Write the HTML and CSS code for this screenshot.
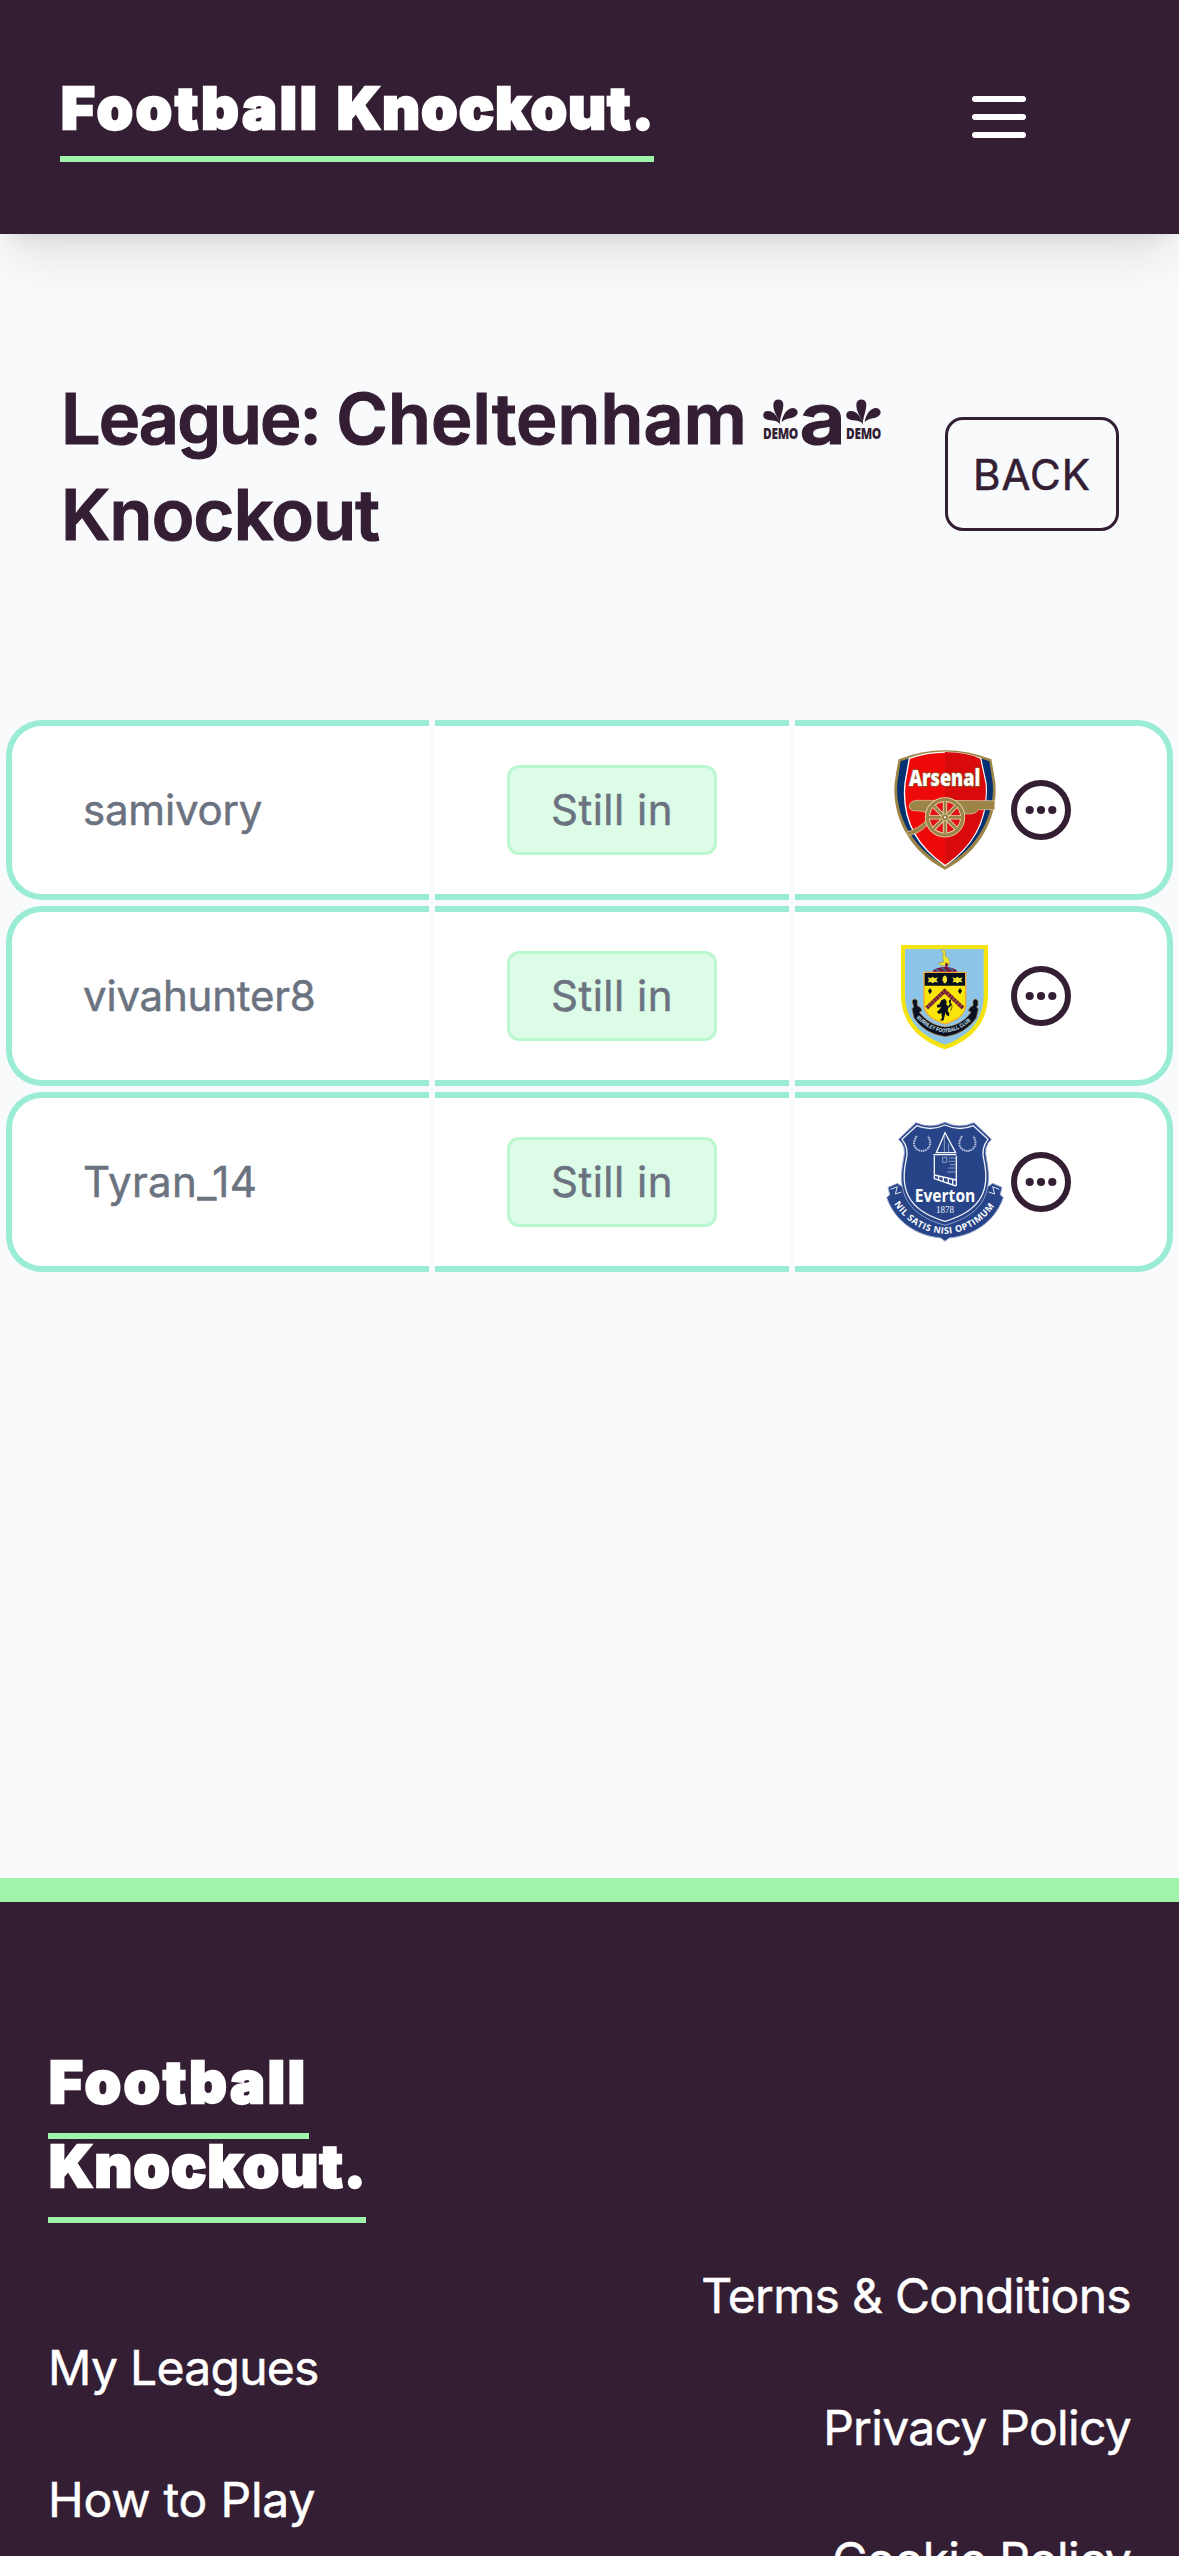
FILE: index.html
```html
<!DOCTYPE html>
<html lang="en">
<head>
<meta charset="utf-8">
<title>Football Knockout</title>
<link rel="stylesheet" href="styles.css">
</head>
<body>
<svg class="defs" aria-hidden="true">
  <defs>
    <symbol id="splash" viewBox="0 0 105 120">
      <path d="M50 77C50 60 31 42 31 18a15 15 0 0 1 30-3C61 37 51 52 50 77z"/>
      <path d="M52 79C44 60 26 68 9 61a13 13 0 0 1 6-25C34 36 47 57 52 79z"/>
      <path d="M56 69C60 45 73 28 90 27a13 13 0 0 1 10 22C91 61 71 55 56 69z"/>
      <text x="0" y="119" textLength="105" lengthAdjust="spacingAndGlyphs" font-family="Open Sans, sans-serif" font-weight="800" font-size="46">DEMO</text>
    </symbol>
    <symbol id="dots" viewBox="0 0 60 60">
      <circle cx="30" cy="30" r="27" fill="none" stroke="#341e34" stroke-width="6"/>
      <g fill="#341e34"><circle cx="18.7" cy="30" r="4.1"/><circle cx="30" cy="30" r="4.1"/><circle cx="41.3" cy="30" r="4.1"/></g>
    </symbol>
  </defs>
</svg>

<header class="topbar">
  <a class="logo"><span class="w1">Football</span> <span class="w2">Knockout.</span></a>
  <div class="burger"><i></i><i></i><i></i></div>
</header>

<main class="main">
  <div class="heading">
    <h1 class="title"><span class="first">League:</span> <span class="place">Cheltenham</span> <svg class="splash"><use href="#splash"/></svg><span class="mid">a</span><svg class="splash"><use href="#splash"/></svg> <span class="last">Knockout</span></h1>
    <button class="back">BACK</button>
  </div>

  <div class="table">
    <div class="row">
      <div class="cell name">samivory</div>
      <div class="cell status"><span class="badge">Still in</span></div>
      <div class="cell pick">
        <svg class="crest" viewBox="75 60 360 360">
          <path d="M116 88Q255 34 394 88Q400 120 406 160C414 250 370 360 255 419C140 360 96 250 104 160Q109 120 116 88z" fill="#9c8447"/>
          <path d="M122 94Q255 42 388 94Q393 125 398 160C405 246 362 350 255 408C148 350 105 246 112 160Q117 125 122 94z" fill="#023071"/>
          <path d="M148 85Q255 48 362 85L378 160C386 270 338 350 255 407C172 350 124 270 135 160z" fill="#ef0a0a" stroke="#fff" stroke-width="4"/>
          <path d="M255 66Q320 66 360 86L376 160C384 270 336 349 255 404z" fill="#d90a0c"/>
          <path d="M404 212v27h-48q-8 12-24 13H205q-12-10-45-10-14-3-12-15 2-13 20-16z" fill="#9c8447" stroke="#e8cfad" stroke-width="2"/>
          <path d="M215 262q-16 42-67 55l-12-9q42-13 67-41z" fill="#9c8447" stroke="#e8cfad" stroke-width="2"/>
          <circle cx="255" cy="262" r="53" fill="#e21114" stroke="#e8d9b5" stroke-width="15"/>
          <circle cx="255" cy="262" r="53" fill="none" stroke="#9c8447" stroke-width="10"/>
          <g stroke="#e8d9b5" stroke-width="13"><path d="M255 214v96M207 262h96M221 228l68 68M289 228l-68 68"/></g>
          <g stroke="#9c8447" stroke-width="8"><path d="M255 214v96M207 262h96M221 228l68 68M289 228l-68 68"/></g>
          <circle cx="255" cy="262" r="11" fill="#9c8447" stroke="#e8d9b5" stroke-width="2"/><circle cx="255" cy="262" r="3" fill="#fff"/>
          <text x="147" y="169" textLength="214" lengthAdjust="spacingAndGlyphs" font-family="Open Sans, sans-serif" font-weight="800" font-size="66" fill="#fff" stroke="#8f5a2c" stroke-width="5" paint-order="stroke">Arsenal</text>
        </svg>
        <svg class="more"><use href="#dots"/></svg>
      </div>
    </div>
    <div class="row">
      <div class="cell name">vivahunter8</div>
      <div class="cell status"><span class="badge">Still in</span></div>
      <div class="cell pick">
        <svg class="crest" viewBox="75 48 360 360">
          <path d="M123 75H384V226C384 310 330 364 255 388C180 364 123 310 123 226z" fill="#f3e310"/>
          <path d="M135 87H371V226C371 302 324 350 255 374C186 350 135 302 135 226z" fill="#8cc5e8"/>
          <path d="M244 94q8-9 13 1l-2 12q16 8 14 25l-8 5h-18l-7-9 14-1q2-9-2-14l2-14z" fill="#f0e52a" stroke="#8d8c40" stroke-width="1.5"/>
          <path d="M257 127l8 5-5 12h-5z" fill="#7a1940"/>
          <path d="M217 153q14-12 38-12t37 12l-6 4H222z" fill="#74183f"/>
          <path d="M226 147l12 8M246 143l12 10M268 143l12 10" stroke="#347bb4" stroke-width="4"/>
          <path d="M192 157H317V253C317 286 288 301 255 312C222 301 192 286 192 253z" fill="#f9e509" stroke="#f2a93b" stroke-width="4"/>
          <path d="M194 159H315V197H194z" fill="#060e20"/>
          <g fill="#eee32f"><path d="M203 172l9 3 6-5 6 5 10-3-5 8 5 7-10-1-6 4-6-4-9 1 4-7zM277 172l9 3 6-5 6 5 10-3-5 8 5 7-10-1-6 4-6-4-9 1 4-7z"/><path d="M249 170l7-4 5 7v9l-4 8h-5l-5-10z"/></g>
          <path d="M200 264L254 213L309 264" fill="none" stroke="#77203e" stroke-width="12" stroke-dasharray="9 1"/>
          <path d="M210 204l6 9-6 10-6-10zM300 204l6 9-6 10-6-10z" fill="#060e20"/>
          <path d="M244 241l10-5 6 8-1 10 7 5 3-8-3-9 8-5-2 9 1 11-8 7-2 9 5 7-1 9-8-4-2-9-4 16-3 10-10-1 6-7-2-15-8 3-5-7 7-6 6-8-11 2-3-7 8-3z" fill="#060e20"/>
          <path d="M272 272q8-12 1-23" fill="none" stroke="#060e20" stroke-width="2"/>
          <path d="M156 243q8-12 16-1v15q12 4 14 15l-8 5q30 39 78 44 50-5 77-44l-8-5q3-12 14-15v-15q8-10 15 1v12l-4 6 5 6-6 27q-34 48-93 56-61-8-94-56l-6-27 5-7z" fill="#081022" stroke="#b98640" stroke-width="2"/>
          <path id="ban" d="M169 294Q209 334 255 338Q303 334 341 294" fill="none"/>
          <text font-family="Liberation Sans, sans-serif" font-weight="700" font-size="17" fill="#cfe3ee"><textPath href="#ban" textLength="186" lengthAdjust="spacingAndGlyphs">BURNLEY FOOTBALL CLUB</textPath></text>
        </svg>
        <svg class="more"><use href="#dots"/></svg>
      </div>
    </div>
    <div class="row">
      <div class="cell name tyran">Tyran_14</div>
      <div class="cell status"><span class="badge">Still in</span></div>
      <div class="cell pick">
        <svg class="crest" viewBox="75 66 360 360">
          <path d="M84 262L112 250 130 262 255 372 380 262 398 250 426 262 421 284 430 293C404 368 336 408 268 414L255 424 242 414C174 408 106 368 80 293L89 284z" fill="#274488" stroke="#aab7d6" stroke-width="3"/>
          <path d="M92 268l20-8-6 22 18-6M418 268l-20-8 6 22-18-6" fill="none" stroke="#dfe5f1" stroke-width="3"/>
          <path d="M168 68Q212 88 255 67Q298 88 342 68L394 118Q370 139 379 176C396 260 386 340 255 376C124 340 114 260 131 176Q140 139 116 118z" fill="#274488" stroke="#8c9cc6" stroke-width="3"/>
          <path d="M170 77Q212 95 255 75Q298 95 340 77L384 118Q362 144 372 182C389 262 372 330 255 364C138 330 121 262 138 182Q148 144 126 118z" fill="#274488" stroke="#eef1f8" stroke-width="4"/>
          <g fill="none" stroke="#b6c2df" stroke-width="6" stroke-dasharray="5 2"><path d="M170 108q-16 26 0 39 16 12 32 0 16-15 2-39M306 108q-16 26 0 39 16 12 32 0 16-15 2-39"/></g>
          <g fill="none" stroke="#f4f6fb" stroke-width="4"><path d="M255 98L229 158H287zM220 164H289M223 167V225M289 167V258M223 225L289 240M221 235L288 258M223 225v10M236 228v11M250 231v14M265 235v16M278 238v16"/></g>
          <path d="M253 108v50M266 130v28M248 172h12v15h-12zM268 174h18M265 184h20M270 194h17M265 204h20M262 216h25" fill="none" stroke="#c3cde4" stroke-width="2"/>
          <text x="164" y="305" textLength="182" lengthAdjust="spacingAndGlyphs" font-family="Open Sans, sans-serif" font-weight="700" font-size="54" fill="#fff">Everton</text>
          <text x="228" y="340" textLength="54" lengthAdjust="spacingAndGlyphs" font-family="Liberation Serif, serif" font-size="31" fill="#eef1f8">1878</text>
          <path id="motto" d="M102 311Q156 396 255 402Q354 396 409 308" fill="none"/>
          <text font-family="Open Sans, sans-serif" font-weight="700" font-size="27" fill="#fff"><textPath href="#motto" textLength="362">NIL SATIS NISI OPTIMUM</textPath></text>
        </svg>
        <svg class="more"><use href="#dots"/></svg>
      </div>
    </div>
  </div>
</main>

<footer class="footer">
  <div class="col">
    <div class="flogo"><span class="w1">Football</span><span class="w2">Knockout.</span></div>
    <a class="link">My Leagues</a>
    <a class="link wide">How to Play</a>
  </div>
  <div class="col right">
    <a class="link">Terms &amp; Conditions</a>
    <a class="link">Privacy Policy</a>
    <a class="link">Cookie Policy</a>
  </div>
</footer>
</body>
</html>
```
FILE: styles.css
```css
* { box-sizing: border-box; }
body {
  margin: 0;
  height: 2556px;
  overflow: hidden;
  display: flex;
  flex-direction: column;
  background: #f9fafc;
  font-family: Inter, "Liberation Sans", sans-serif;
  font-size: 42px;
  -webkit-text-stroke: .5px currentColor;
}
.defs { position: absolute; width: 0; height: 0; }
svg { -webkit-text-stroke: 0; }

.topbar {
  flex: none;
  height: 234px;
  padding: 75px 153px 0 60px;
  display: flex;
  justify-content: space-between;
  align-items: flex-start;
  background: #341e34;
  box-shadow: 0 30px 45px -9px rgba(0,0,0,.1), 0 12px 18px -12px rgba(0,0,0,.1);
}
.logo, .flogo {
  color: #fff;
  font-size: 58px;
  font-weight: 900;
  -webkit-text-stroke: 2.4px #fff;
}
.logo {
  display: flex;
  gap: 17px;
  width: 594px;
  line-height: 66px;
  padding: 0 0 15px 1px;
  border-bottom: 6px solid #9ff3aa;
  white-space: nowrap;
}
.w1 { letter-spacing: 2.9px; }
.w2 { letter-spacing: 1.4px; }
.burger { width: 54px; margin-top: 21px; display: flex; flex-direction: column; gap: 12px; }
.burger i { height: 6px; border-radius: 3px; background: #fff; }

.main { flex: none; height: 1644px; padding: 137px 6px 0; }
.heading { height: 349px; padding: 0 54px 0 55px; display: flex; justify-content: space-between; align-items: flex-start; }
.title {
  margin: 0;
  width: 860px;
  font-size: 70px;
  line-height: 96px;
  font-weight: 600;
  letter-spacing: -1.2px;
  color: #341e34;
  -webkit-text-stroke: 1.2px #341e34;
}
.first { letter-spacing: -1.9px; }
.place { letter-spacing: .1px; }
.last { display: block; letter-spacing: -.7px; }
.mid { display: inline-block; width: 48px; text-align: center; transform: scaleX(1.15); }
.splash { width: 35px; height: 40px; fill: #341e34; vertical-align: 5px; }
.back {
  width: 174px;
  height: 114px;
  margin-top: 46px;
  padding: 0;
  border: 3px solid #341e34;
  border-radius: 18px;
  background: none;
  color: #341e34;
  font: 400 42px Inter, sans-serif;
  letter-spacing: 1px;
  -webkit-text-stroke: .6px #341e34;
}

.table { display: flex; flex-direction: column; gap: 6px; }
.row { display: grid; grid-template-columns: 423px 354px 378px; gap: 6px; height: 180px; }
.cell {
  display: flex;
  align-items: center;
  justify-content: center;
  background: #fff;
  border: solid #9becd4;
  border-width: 6px 0;
  color: #6b7280;
}
.name { justify-content: flex-start; padding: 0 0 2px 71px; border-left-width: 6px; border-radius: 36px 0 0 36px; letter-spacing: -.2px; }
.tyran { letter-spacing: .4px; }
.pick { border-right-width: 6px; border-radius: 0 36px 36px 0; }
.badge {
  width: 210px;
  height: 90px;
  line-height: 84px;
  text-align: center;
  letter-spacing: .5px;
  background: #dcfce7;
  border: 3px solid #bbf7d0;
  border-radius: 12px;
}
.crest { width: 120px; height: 120px; }
.more { width: 60px; height: 60px; margin: 0 6px; }

.footer {
  flex: none;
  height: 678px;
  border-top: 24px solid #9ff3aa;
  background: #341e34;
  padding: 153px 48px 0;
  display: flex;
  justify-content: space-between;
  color: #fff;
}
.col { display: flex; flex-direction: column; align-items: flex-start; }
.right { align-items: flex-end; padding-top: 175px; }
.flogo { display: flex; flex-direction: column; align-items: flex-start; margin-bottom: 79px; }
.flogo span { line-height: 54px; padding: 0 0 24px 1px; border-bottom: 6px solid #9ff3aa; }
.flogo .w1 { width: 261px; }
.flogo .w2 { width: 318px; }
.link { font-size: 48px; line-height: 132px; letter-spacing: -.7px; white-space: nowrap; }
.wide { letter-spacing: -.2px; }
```
